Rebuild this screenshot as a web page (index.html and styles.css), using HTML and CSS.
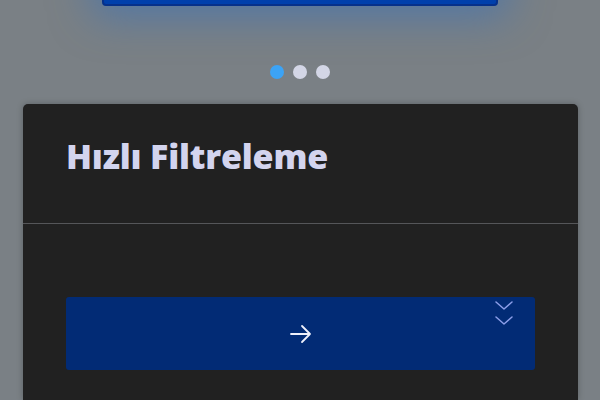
FILE: index.html
```html
<!DOCTYPE html>
<html lang="tr">
<head>
<meta charset="utf-8">
<link rel="stylesheet" href="styles.css">
</head>
<body>
<div class="carousel">
  <div class="slide"></div>
  <div class="dots">
    <span class="dot active"></span>
    <span class="dot"></span>
    <span class="dot"></span>
  </div>
</div>
<section class="card">
  <div class="card-header">
    <h2 class="title">Hızlı Filtreleme</h2>
  </div>
  <div class="card-body">
    <div class="select">
      <svg class="arrow" width="24" height="20" viewBox="0 0 24 20" fill="none" stroke="#eef0fb" stroke-width="1.8" stroke-linecap="round" stroke-linejoin="round">
        <path d="M2 10H21M13 2L21 10L13 18"/>
      </svg>
      <svg class="chevrons" width="18" height="26" viewBox="0 0 18 26" fill="none" stroke="#8c9ee8" stroke-width="1.5" stroke-linecap="round" stroke-linejoin="round">
        <path d="M1 2L9 9L17 2M1 17L9 24L17 17"/>
      </svg>
    </div>
  </div>
</section>
</body>
</html>
```
FILE: styles.css
```css
html, body {
  margin: 0;
  padding: 0;
}
body {
  width: 600px;
  height: 400px;
  overflow: hidden;
  background: #7a8085;
  font-family: "Open Sans", "DejaVu Sans", sans-serif;
}
.carousel {
  display: flex;
  flex-direction: column;
  align-items: center;
}
.slide {
  width: 396px;
  height: 46px;
  margin-top: -40px;
  background: #0040ac;
  border: 2px solid #06318a;
  box-sizing: border-box;
  border-radius: 4px;
  box-shadow: 0 0 40px 10px rgba(40, 110, 200, 0.5);
}
.dots {
  display: flex;
  gap: 9px;
  margin-top: 59px;
}
.dot {
  width: 14px;
  height: 14px;
  border-radius: 50%;
  background: #d3d6e6;
}
.dot.active {
  background: #3ca3f5;
}
.card {
  margin: 25px 22px 0 23px;
  background: #212121;
  border-radius: 5px 5px 0 0;
  height: 296px;
  box-shadow: 0 0 6px rgba(0,0,0,0.25);
}
.card-header {
  height: 120px;
  box-sizing: border-box;
  padding: 29px 0 0 43px;
  border-bottom: 1px solid #555659;
}
.title {
  margin: 0;
  font-size: 34px;
  font-weight: 800;
  line-height: 46px;
  color: #d3d4ee;
  letter-spacing: -0.2px;
}
.card-body {
  padding: 73px 43px 0 43px;
}
.select {
  position: relative;
  height: 73px;
  background: #022b75;
  border-radius: 3px;
  display: flex;
  align-items: center;
  justify-content: center;
}
.chevrons {
  position: absolute;
  right: 22px;
  top: 3px;
}
```
